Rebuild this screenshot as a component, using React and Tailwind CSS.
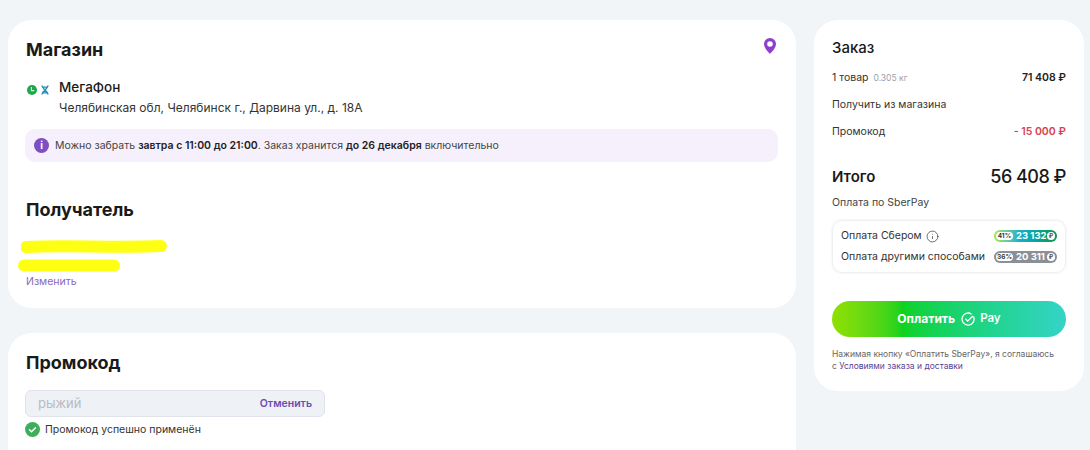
import React from 'react';
import { Info } from 'lucide-react';

const font = { fontFamily: 'Inter, "Noto Sans", sans-serif' };

function Row({ children, right }) {
  return (
    <div className="flex justify-between items-center h-[27px] text-[10.5px] text-[#333]">
      <div className="flex items-baseline gap-[5px]">{children}</div>
      {right}
    </div>
  );
}

function Badge({ percent, sum, green }) {
  return (
    <div
      className={`flex items-center h-[12px] w-[63px] rounded-full px-[2px] font-bold text-white ${
        green ? 'bg-gradient-to-r from-[#a5e63a] via-[#16aed0] via-40% to-[#12964f]' : 'bg-[#8b9097]'
      }`}
    >
      <span className="flex items-center justify-center h-[8px] w-[17px] rounded-full bg-white text-[6.5px] leading-none text-[#333]">
        {percent}%
      </span>
      <span className="ml-[3px] text-[9.5px] leading-none whitespace-nowrap">{sum}</span>
      <span className="ml-auto flex items-center justify-center h-[8px] w-[8px] rounded-full bg-white text-[6px] leading-none text-[#555]">
        ₽
      </span>
    </div>
  );
}

export default function App() {
  return (
    <div style={font} className="h-[450px] w-[1090px] overflow-hidden bg-[#f2f5f8] pt-5 pl-2 flex items-start gap-[18px]">
      <div className="w-[788px] flex flex-col gap-[25px]">
        {/* store + recipient */}
        <div className="h-[288px] bg-white rounded-[24px] pl-[18px] pr-[18px] pt-[19px]">
          <div className="flex justify-between items-start">
            <h2 className="text-[18px] leading-[22px] font-bold text-[#1a1a1a]">Магазин</h2>
            <svg width="12" height="16" viewBox="0 0 12 16" className="mr-[2px] mt-[-1px]">
              <path
                fillRule="evenodd"
                d="M6 0a6 6 0 0 1 6 6c0 3.6-3.6 7.6-6 9.8C3.6 13.6 0 9.6 0 6a6 6 0 0 1 6-6Zm0 3.2a2.8 2.8 0 1 0 0 5.6 2.8 2.8 0 0 0 0-5.6Z"
                fill="#8f3fd0"
              />
            </svg>
          </div>

          <div className="flex mt-[16px]">
            <div className="w-[33px] flex items-center gap-[4px] h-[20px] pt-[5px] pl-px">
              <svg width="10" height="10" viewBox="0 0 10 10" className="shrink-0">
                <circle cx="5" cy="5" r="5" fill="#1fa84a" />
                <path d="M4.4 2v3.6h2.8" stroke="#d8f2df" strokeWidth="1.1" fill="none" />
              </svg>
              <svg width="8" height="10" viewBox="0 0 8 10" className="shrink-0">
                <path d="M1 .5c0 3 6 6 6 9M7 .5c0 3-6 6-6 9M1.5 2.2h5M1.5 7.8h5" stroke="#1e8fb8" strokeWidth="1.3" fill="none" />
              </svg>
            </div>
            <div>
              <div className="text-[13.5px] leading-[20px] font-medium text-[#1a1a1a]">МегаФон</div>
              <div className="text-[12px] leading-[18px] mt-[2px] text-[#333]">
                Челябинская обл, Челябинск г., Дарвина ул., д. 18А
              </div>
            </div>
          </div>

          <div className="mt-[12px] -ml-px h-[33px] bg-[#f5f0fc] rounded-[10px] flex items-center pl-[9px] text-[10.5px] text-[#444]">
            <span className="w-[15px] h-[15px] rounded-full bg-[#7e4fc0] text-white flex items-center justify-center text-[10px] font-bold mr-[6px]">
              i
            </span>
            <span>
              Можно забрать <b className="font-semibold text-[#222]">завтра с 11:00 до 21:00</b>. Заказ хранится{' '}
              <b className="font-semibold text-[#222]">до 26 декабря</b> включительно
            </span>
          </div>

          <h2 className="mt-[37px] text-[18px] leading-[22px] font-bold text-[#1a1a1a]">Получатель</h2>

          <svg width="150" height="18" viewBox="0 0 150 18" className="mt-[17px] -ml-[5px] block">
            <path d="M5 9c40-2 90 1 135-1" stroke="#ffff14" strokeWidth="12" strokeLinecap="round" fill="none" />
          </svg>
          <svg width="102" height="15" viewBox="0 0 102 15" className="mt-[2px] -ml-[8px] block">
            <path d="M6 7.5h90" stroke="#ffff14" strokeWidth="12" strokeLinecap="round" fill="none" />
          </svg>
          <div className="text-[10.5px] leading-[14px] mt-[2px] text-[#8a68bd]">Изменить</div>
        </div>

        {/* promo code */}
        <div className="h-[140px] bg-white rounded-[24px] pl-[18px] pt-[19px]">
          <h2 className="text-[18px] leading-[22px] font-bold text-[#1a1a1a]">Промокод</h2>
          <div className="mt-[16px] -ml-px w-[300px] h-[27px] bg-[#eef1f6] border border-[#e0e4ea] rounded-[6px] flex items-center justify-between pl-[12px] pr-[12px]">
            <span className="text-[13px] text-[#b7bcc4]">рыжий</span>
            <span className="text-[10.5px] font-semibold text-[#6f4bb0]">Отменить</span>
          </div>
          <div className="flex items-center gap-[5px] -ml-px mt-[5px] text-[10.5px] text-[#333]">
            <svg width="15" height="15" viewBox="0 0 15 15">
              <circle cx="7.5" cy="7.5" r="7.5" fill="#3fae5a" />
              <path d="m4.5 7.8 2 2 4-4" stroke="#fff" strokeWidth="1.4" fill="none" strokeLinecap="round" />
            </svg>
            Промокод успешно применён
          </div>
        </div>
      </div>

      {/* order summary */}
      <div className="w-[270px] h-[371px] bg-white rounded-[24px] px-[18px] pt-[18px]">
        <h3 className="text-[15px] leading-[20px] font-medium text-[#1a1a1a]">Заказ</h3>
        <div className="mt-[6px]">
          <Row right={<span className="font-semibold text-[#222]">71 408 ₽</span>}>
            1 товар <span className="text-[8.5px] text-[#9aa1a9]">0.305 кг</span>
          </Row>
          <Row>Получить из магазина</Row>
          <Row right={<span className="font-semibold text-[#d8434e]">- 15 000 ₽</span>}>Промокод</Row>
        </div>
        <div className="flex justify-between items-center mt-[20px]">
          <span className="text-[15px] font-semibold text-[#1a1a1a]">Итого</span>
          <span className="text-[18px] leading-[24px] font-medium tracking-[-0.5px] text-[#1a1a1a]">56 408 ₽</span>
        </div>
        <div className="text-[10.5px] leading-[14px] mt-[7px] text-[#444]">Оплата по SberPay</div>

        <div className="mt-[10px] h-[53px] rounded-[10px] border border-[#eef0f3] shadow-[0_0_3px_rgba(0,0,0,0.08)] pl-[8px] pr-[8px] flex flex-col justify-center gap-[6px]">
          <div className="flex justify-between items-center h-[15px] text-[10.5px] text-[#333]">
            <span className="flex items-center gap-[4px]">
              Оплата Сбером <Info size={13} strokeWidth={1.3} />
            </span>
            <Badge percent={41} sum="23 132" green />
          </div>
          <div className="flex justify-between items-center h-[15px] text-[10.5px] text-[#333]">
            <span className="whitespace-nowrap">Оплата другими способами</span>
            <Badge percent={36} sum="20 311" />
          </div>
        </div>

        <button
          type="button"
          className="mt-[28px] w-full h-[36px] rounded-full bg-gradient-to-r from-[#8fe000] via-[#0fd21c] via-30% to-[#35d3c8] flex items-center justify-center gap-[5px] text-white text-[12px] font-bold"
        >
          Оплатить
          <svg width="14" height="14" viewBox="0 0 14 14" className="ml-[1px]">
            <path d="M12.5 4.5A6 6 0 1 1 10.6 2.2" stroke="#fff" strokeWidth="1.3" fill="none" />
            <path d="m4.4 6.8 2.2 2.2 5.4-5" stroke="#fff" strokeWidth="1.3" fill="none" />
          </svg>
          <span className="font-semibold text-[11.5px]">Pay</span>
        </button>

        <p className="mt-[11px] text-[8.5px] leading-[12px] text-[#666] whitespace-nowrap">
          Нажимая кнопку «Оплатить SberPay», я соглашаюсь
          <br />с <span className="text-[#5d3f8f]">Условиями заказа и доставки</span>
        </p>
      </div>
    </div>
  );
}
